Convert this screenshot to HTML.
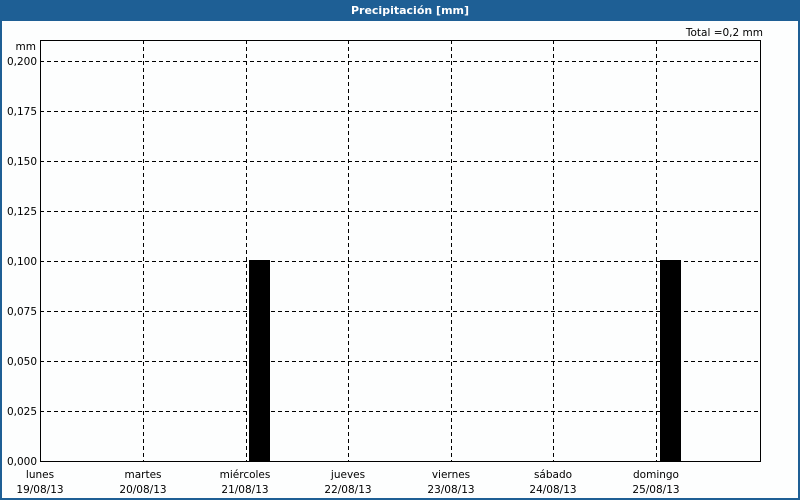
<!DOCTYPE html>
<html><head><meta charset="utf-8"><style>
body{margin:0;width:800px;height:500px;overflow:hidden;background:#fff;font-family:"DejaVu Sans","Liberation Sans",sans-serif}
</style></head><body>
<svg width="800" height="500" xmlns="http://www.w3.org/2000/svg" style="display:block" font-family="DejaVu Sans, Liberation Sans, sans-serif" font-size="10.5">
<rect x="0" y="0" width="800" height="500" fill="#1e5f95"/>
<rect x="2" y="21" width="796" height="477" fill="#fdfefe"/>
<text x="410" y="14" fill="#fff" font-weight="bold" text-anchor="middle" font-size="11">Precipitación [mm]</text>
<text x="763" y="36" text-anchor="end" fill="#000">Total =0,2 mm</text>
<text x="36" y="50" text-anchor="end">mm</text>
<g stroke="#000" stroke-width="1" stroke-dasharray="4,3" fill="none">
<path d="M40 61.5H761M40 111.5H761M40 161.5H761M40 211.5H761M40 261.5H761M40 311.5H761M40 361.5H761M40 411.5H761"/>
<path d="M143.5 40V461M246.5 40V461M348.5 40V461M451.5 40V461M553.5 40V461M656.5 40V461"/>
</g>
<rect x="249" y="260" width="21" height="201" fill="#000"/>
<rect x="660" y="260" width="21" height="201" fill="#000"/>
<rect x="40.5" y="40.5" width="720" height="421" fill="none" stroke="#000"/>
<g text-anchor="end">
<text x="37" y="65">0,200</text><text x="37" y="115">0,175</text><text x="37" y="165">0,150</text>
<text x="37" y="215">0,125</text><text x="37" y="265">0,100</text><text x="37" y="315">0,075</text>
<text x="37" y="365">0,050</text><text x="37" y="415">0,025</text><text x="37" y="465">0,000</text>
</g>
<g text-anchor="middle">
<text x="40" y="478">lunes</text><text x="40" y="493">19/08/13</text>
<text x="143" y="478">martes</text><text x="143" y="493">20/08/13</text>
<text x="245" y="478">miércoles</text><text x="245" y="493">21/08/13</text>
<text x="348" y="478">jueves</text><text x="348" y="493">22/08/13</text>
<text x="451" y="478">viernes</text><text x="451" y="493">23/08/13</text>
<text x="553" y="478">sábado</text><text x="553" y="493">24/08/13</text>
<text x="656" y="478">domingo</text><text x="656" y="493">25/08/13</text>
</g>
</svg>
</body></html>
